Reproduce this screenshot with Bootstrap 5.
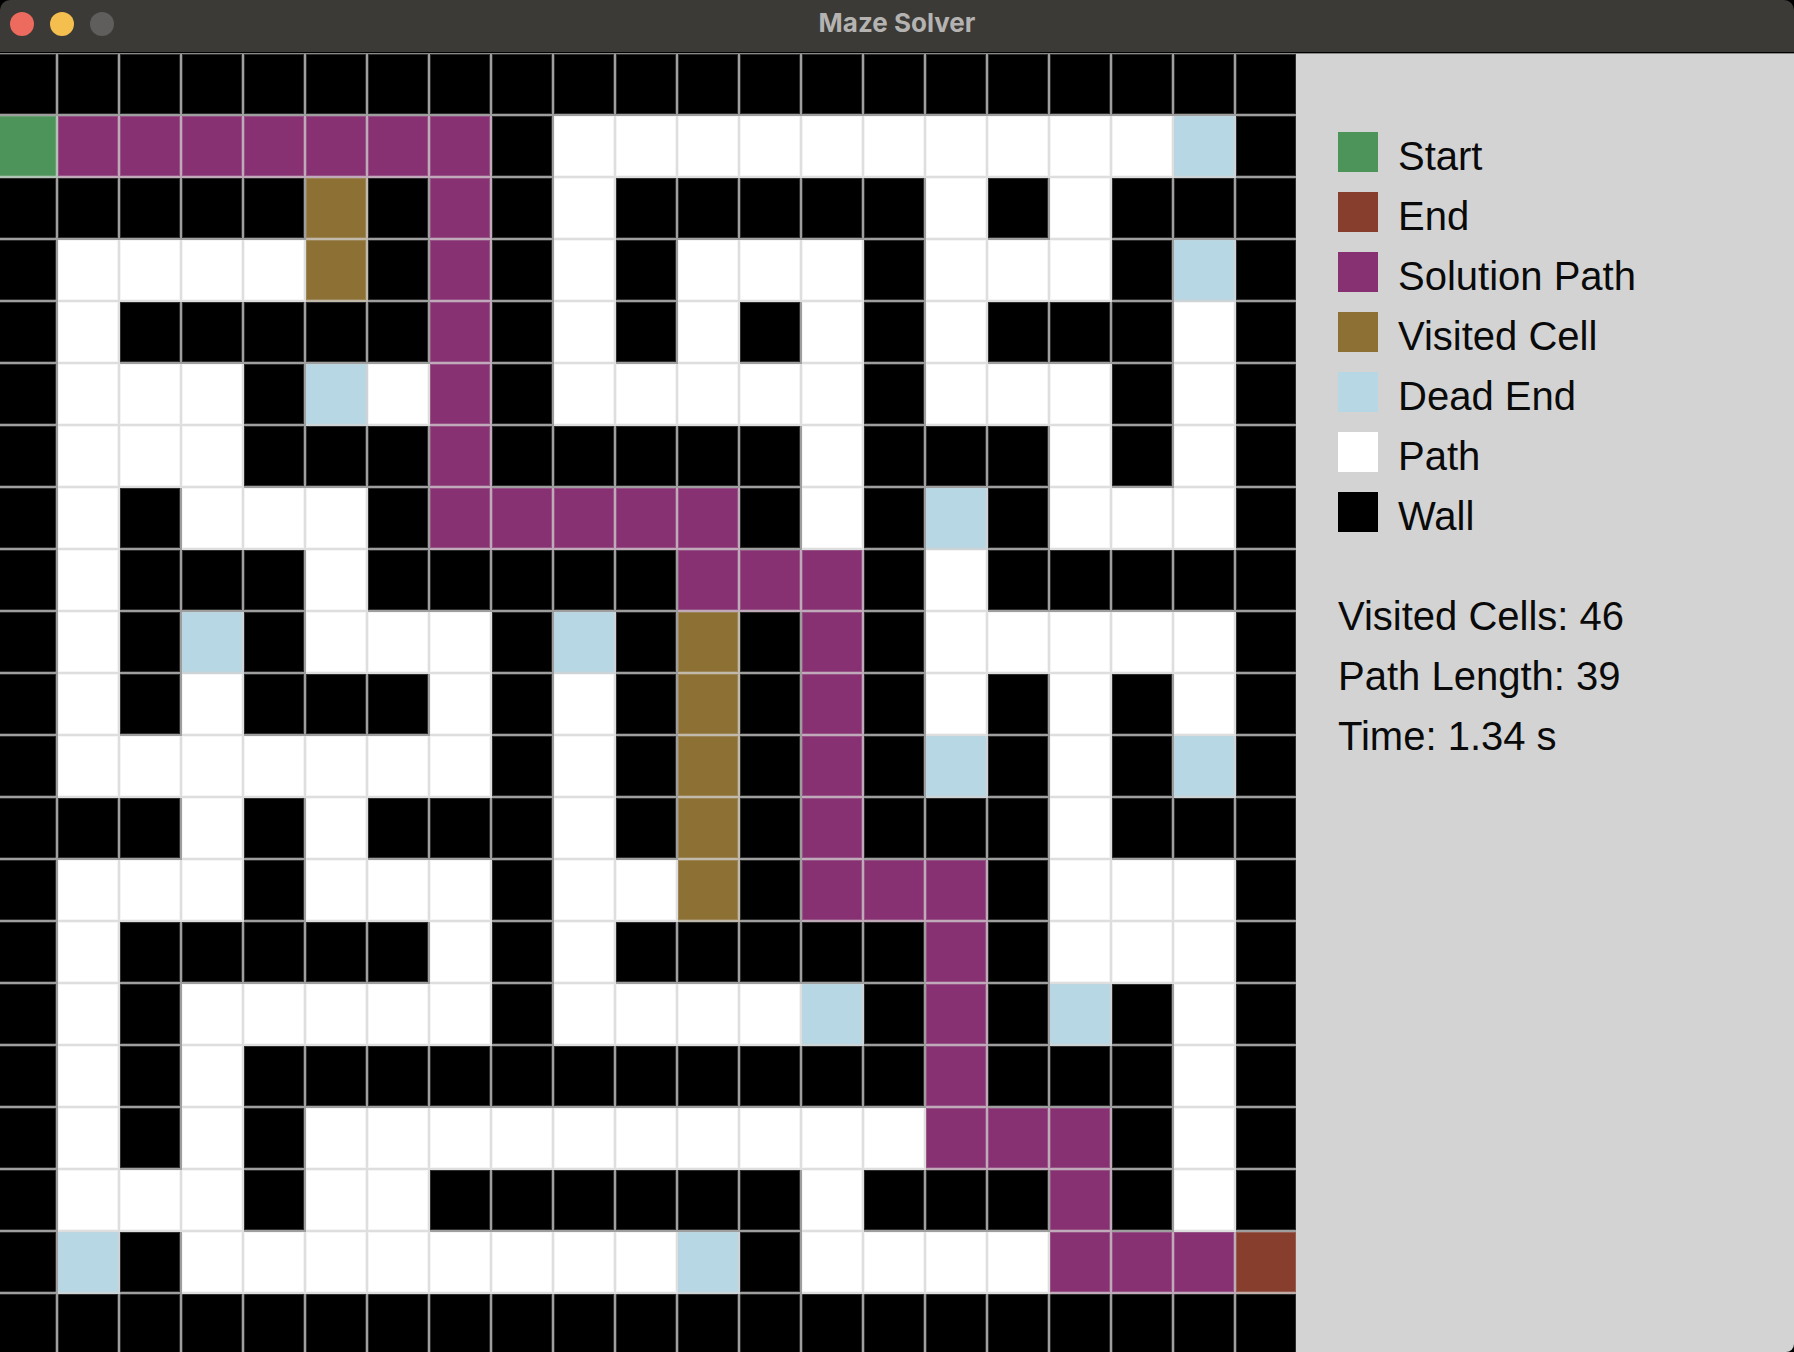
<!DOCTYPE html>
<html lang="en">
<head>
<meta charset="utf-8">
<meta name="viewport" content="width=device-width, initial-scale=1">
<title>Maze Solver</title>
<link href="https://cdn.jsdelivr.net/npm/bootstrap@5.3.0/dist/css/bootstrap.min.css" rel="stylesheet">
<style>
  :root {
    --start: #4c9459;
    --finish: #883e2d;
    --solution: #873172;
    --visited: #8d7034;
    --dead: #b6d7e3;
    --open: #fff;
    --wall: #000;
    --panel: #d3d3d3;
    --halo: rgba(211, 211, 211, .22);
  }
  body { background: #000; font-family: "Liberation Sans", Arial, sans-serif; }
  .titlebar {
    height: 53px;
    padding: 0 10px 5px;
    background: #3b3a37;
    border-bottom: 1px solid #000;
    border-radius: 10px 10px 0 0;
  }
  .titlebar h1 { font: 700 26px/32px Inter, sans-serif; color: #b5b3b1; padding-bottom: 2px; }
  .lights { gap: 16px; }
  .light { width: 24px; height: 24px; border: 0; padding: 0; border-radius: 50%; }
  .light-close { background: #ed6a5f; }
  .light-min { background: #f5bf4f; }
  .light-zoom { background: #5f5e5c; }
  .stage {
    display: grid;
    grid-template-columns: minmax(0, 1296fr) minmax(0, 498fr);
    border-top: 1px solid #8a8a8a;
  }
  .maze {
    display: grid;
    grid-template-columns: 58fr repeat(19, 62fr) 60fr;
    grid-template-rows: repeat(20, 62fr) 58fr;
  }
  .tile {
    border: solid rgba(211, 211, 211, .75);
    border-width: 0 2px 2px 0;
    box-shadow: inset 0 0 0 1px var(--halo);
  }
  .tile:nth-child(21n) { border-right-width: 0; }
  .tile:nth-child(21n+1) { box-shadow: inset -1px 1px var(--halo), inset 0 -1px var(--halo); }
  .tile:nth-child(n+421) { border-bottom-width: 0; box-shadow: inset -1px 1px var(--halo), inset 1px 0 var(--halo); }
  .tile:nth-child(421) { box-shadow: inset -1px 1px var(--halo); }
  .side {
    background: var(--panel);
    border-bottom-right-radius: 8px;
    padding: 72px 42px;
    color: #0a0a0a;
    font-size: 40px;
    line-height: 60px;
  }
  .legend-row { gap: 20px; }
  .swatch { width: 40px; height: 40px; margin-top: 6px; }
  .stats { margin-top: 40px; }
  .c-start { background-color: var(--start); }
  .c-finish { background-color: var(--finish); }
  .c-solution { background-color: var(--solution); }
  .c-visited { background-color: var(--visited); }
  .c-dead { background-color: var(--dead); }
  .c-open { background-color: var(--open); }
  .c-wall { background-color: var(--wall); }
</style>
</head>
<body>
<div class="d-flex flex-column min-vh-100">
  <header class="titlebar d-flex align-items-center position-relative">
    <div class="lights d-flex">
      <button type="button" class="light light-close" aria-label="Close"></button>
      <button type="button" class="light light-min" aria-label="Minimize"></button>
      <button type="button" class="light light-zoom" aria-label="Zoom" disabled></button>
    </div>
    <h1 class="position-absolute start-50 translate-middle-x m-0 text-nowrap">Maze Solver</h1>
  </header>
  <main class="stage flex-grow-1">
    <div class="maze" id="maze" role="img" aria-label="Maze with the solution path"></div>
    <aside class="side">
      <ul class="list-unstyled m-0">
        <li class="legend-row d-flex align-items-start"><span class="swatch c-start"></span><span>Start</span></li>
        <li class="legend-row d-flex align-items-start"><span class="swatch c-finish"></span><span>End</span></li>
        <li class="legend-row d-flex align-items-start"><span class="swatch c-solution"></span><span>Solution Path</span></li>
        <li class="legend-row d-flex align-items-start"><span class="swatch c-visited"></span><span>Visited Cell</span></li>
        <li class="legend-row d-flex align-items-start"><span class="swatch c-dead"></span><span>Dead End</span></li>
        <li class="legend-row d-flex align-items-start"><span class="swatch c-open"></span><span>Path</span></li>
        <li class="legend-row d-flex align-items-start"><span class="swatch c-wall"></span><span>Wall</span></li>
      </ul>
      <div class="stats">
        <div>Visited Cells: 46</div>
        <div>Path Length: 39</div>
        <div>Time: 1.34 s</div>
      </div>
    </aside>
  </main>
</div>
<script src="https://cdn.jsdelivr.net/npm/bootstrap@5.3.0/dist/js/bootstrap.bundle.min.js"></script>
<script>
  // S start, E end, P solution, V visited, D dead end, . open path, # wall
  const rows = [
    "#####################",
    "SPPPPPPP#..........D#",
    "#####V#P#.#####.#.###",
    "#....V#P#.#...#...#D#",
    "#.#####P#.#.#.#.###.#",
    "#...#D.P#.....#...#.#",
    "#...###P#####.###.#.#",
    "#.#...#PPPPP#.#D#...#",
    "#.###.#####PPP#.#####",
    "#.#D#...#D#V#P#.....#",
    "#.#.###.#.#V#P#.#.#.#",
    "#.......#.#V#P#D#.#D#",
    "###.#.###.#V#P###.###",
    "#...#...#..V#PPP#...#",
    "#.#####.#.#####P#...#",
    "#.#.....#....D#P#D#.#",
    "#.#.###########P###.#",
    "#.#.#..........PPP#.#",
    "#...#..######.###P#.#",
    "#D#........D#....PPPE",
    "#####################"
  ];
  const kinds = { S: "start", E: "finish", P: "solution", V: "visited", D: "dead", ".": "open", "#": "wall" };
  document.getElementById("maze").innerHTML =
    [...rows.join("")].map(k => `<div class="tile c-${kinds[k]}"></div>`).join("");
</script>
</body>
</html>
